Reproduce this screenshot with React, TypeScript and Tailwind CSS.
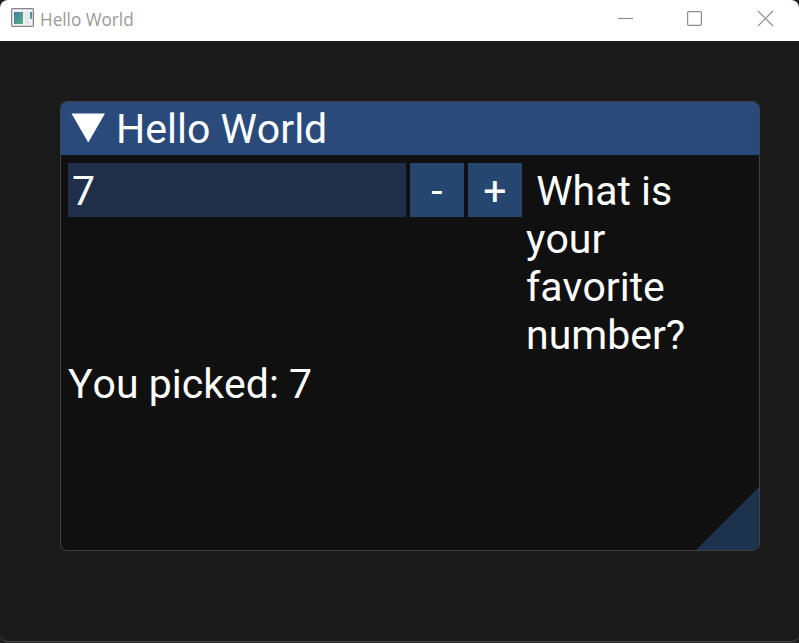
import { useState } from 'react';

function AppIcon() {
  return (
    <svg className="ml-[11px] mt-[8px] block shrink-0" width="24" height="20" viewBox="0 0 24 20">
      <defs>
        <linearGradient id="pane" x1="0" y1="0" x2="1" y2="1">
          <stop offset="0" stopColor="#4678a6" />
          <stop offset="1" stopColor="#55b57e" />
        </linearGradient>
      </defs>
      <rect x="0.5" y="0.5" width="22" height="18" rx="0.5" fill="#f1f1f4" stroke="#85858c" />
      <rect x="1.5" y="1.5" width="20" height="16" fill="none" stroke="#d5d5da" />
      <rect x="3" y="4" width="9" height="12" fill="url(#pane)" />
      <rect x="14" y="4" width="4" height="12" fill="#e6e6ea" />
      <rect x="19" y="4" width="2" height="7" fill="url(#pane)" />
    </svg>
  );
}

function TitleBar() {
  return (
    <header className="flex h-[41px] rounded-t-[8px] bg-white">
      <AppIcon />
      <span className="ml-[5px] mt-[7px] grow whitespace-nowrap font-['Open_Sans',sans-serif] text-[17.5px] leading-6 text-[#999999]">
        <span className="inline-block origin-left scale-x-[0.98]">Hello World</span>
      </span>
      <svg className="block shrink-0" width="199" height="41" fill="none" stroke="#8d8d8d" strokeWidth="1.2">
        <path d="M18 18.5H33" />
        <rect x="87.6" y="11.6" width="13.8" height="13.8" rx="1.2" />
        <path d="M158 11L173 26M173 11L158 26" />
      </svg>
    </header>
  );
}

function StepButton({ label, onClick }: { label: string; onClick: () => void }) {
  return (
    <button onClick={onClick} className="ml-1 h-[54px] w-[54px] shrink-0 bg-[#24466f] pt-px text-center leading-[54px]">
      {label}
    </button>
  );
}

export default function App() {
  const [value, setValue] = useState(7);
  return (
    <div className="h-[643px] w-[799px] overflow-hidden bg-[#202020]">
      <div className="flex h-[642px] flex-col rounded-[8px] border-b border-[#4a4a4a] bg-[#1a1a1a]">
        <TitleBar />
        <main className="ml-[60px] mt-[60px] flex h-[450px] w-[700px] flex-col overflow-hidden rounded-[7px] border border-[#424246] bg-[#101010] font-[Roboto,sans-serif] text-[41px] leading-[48px] text-white [font-kerning:none]">
          <div className="flex h-[53px] shrink-0 items-center bg-[#2a4a7b]">
            <svg className="mb-[2px] ml-[10px] block" width="34" height="30" fill="white">
              <path d="M0.5 0.5H34L17.25 29.5Z" />
            </svg>
            <h1 className="ml-[11px] whitespace-nowrap">Hello World</h1>
          </div>
          <section className="flex grow flex-col px-[7px] pt-2">
            <div className="flex items-start">
              <div className="h-[54px] w-[338px] shrink-0 bg-[#1f2f49] pl-1 pt-px leading-[54px]">{value}</div>
              <StepButton label="-" onClick={() => setValue(value - 1)} />
              <StepButton label="+" onClick={() => setValue(value + 1)} />
              <p className="ml-1 mt-[4px] whitespace-pre">{' What is\nyour\nfavorite\nnumber?'}</p>
            </div>
            <p className="mt-px">You picked: {value}</p>
            <svg className="-mr-[7px] mt-auto block self-end" width="63" height="63">
              <path d="M63 0V63H0Z" fill="#1e334e" />
            </svg>
          </section>
        </main>
      </div>
    </div>
  );
}
